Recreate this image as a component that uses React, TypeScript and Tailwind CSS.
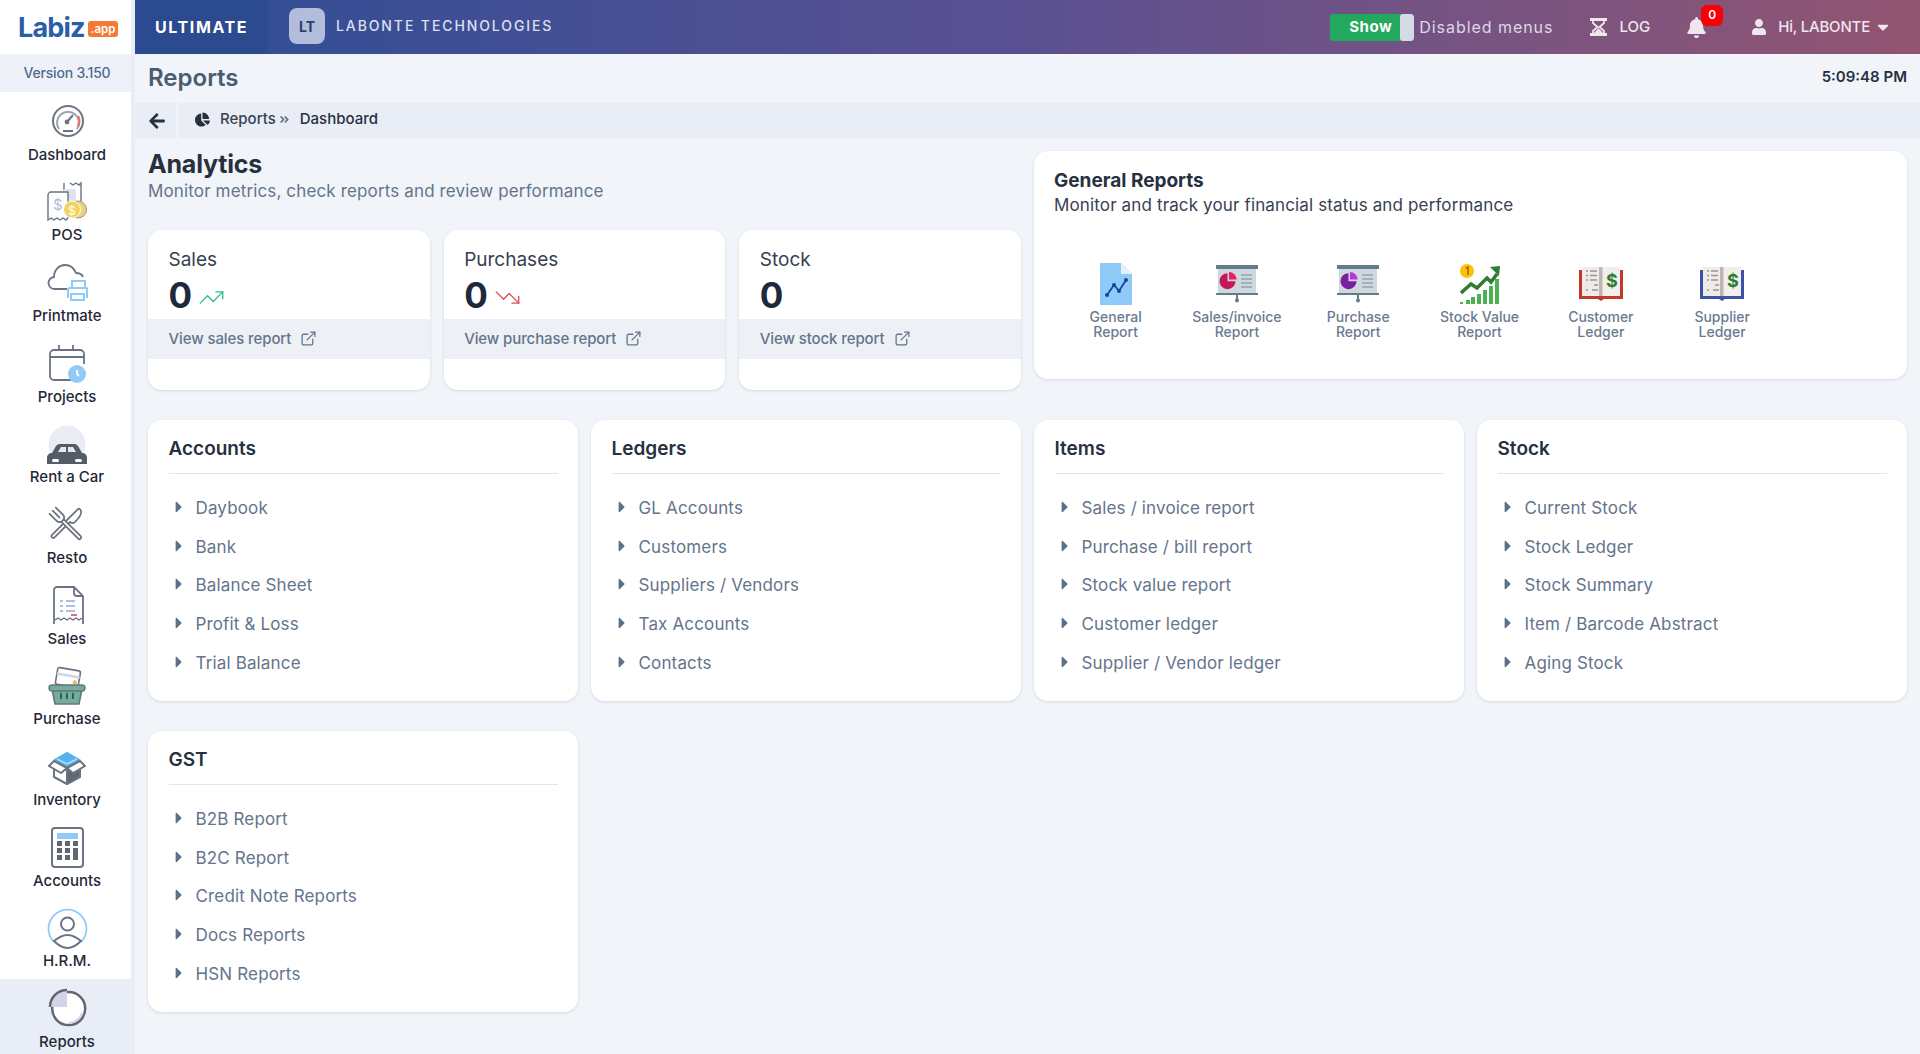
import { ExternalLink, TrendingDown, TrendingUp } from "lucide-react";
import { ReactNode } from "react";
import {
  FaAngleDoubleRight,
  FaArrowLeft,
  FaBell,
  FaCaretDown,
  FaCaretRight,
  FaChartPie,
  FaUser,
} from "react-icons/fa";

const gray = "#6b7280";
const blue = "#90caf9";

function Svg({ size = 40, children }: { size?: number; children: ReactNode }) {
  return (
    <svg width={size} height={size} viewBox="0 0 40 40" fill="none" className="overflow-visible">
      {children}
    </svg>
  );
}

const sideIcons: Record<string, ReactNode> = {
  Dashboard: (
    <Svg>
      <circle cx="21" cy="20" r="15" stroke={gray} strokeWidth="2" />
      <path d="M12 28a11 11 0 1 1 18 0" stroke="#9ca3af" strokeWidth="2" />
      <path d="M31 15a11 11 0 0 1 0 10" stroke="#e57373" strokeWidth="2.5" />
      <path d="M20 21l6-7" stroke={gray} strokeWidth="2" />
      <circle cx="20" cy="21" r="2.4" fill={gray} />
      <path d="M16 30h10" stroke={gray} strokeWidth="2" />
    </Svg>
  ),
  POS: (
    <Svg>
      <path d="M17 10V1M23 1l3 2 3-2 3 2 2-2v18" stroke={gray} strokeWidth="1.4" />
      <rect x="16" y="7" width="13" height="14" rx="2" fill="#dbe4f0" />
      <path d="M21 10H4a3 3 0 0 0-3 3v25l3-2 3 2 3-2 3 2 3-2 3 2 2-2z" fill="#fff" stroke={gray} strokeWidth="1.4" />
      <text x="6" y="28" fontSize="15" fill="#a9c0de" fontFamily="Inter, sans-serif">
        $
      </text>
      <circle cx="31" cy="27.500" r="8.500" fill="#e9d27f" stroke="#9f9369" strokeWidth="1" />
      <circle cx="25" cy="27.500" r="8.500" fill="#f3d35f" stroke="#fff" strokeWidth="1" />
      <text x="21" y="33" fontSize="12" fill="#fff" fontFamily="Inter, sans-serif">
        $
      </text>
    </Svg>
  ),
  Printmate: (
    <Svg>
      <path
        d="M20 27H8a6 6 0 0 1-1-12c0-7 5-12 11-12 5 0 9 3 11 8 3 0 6 1 7 4"
        stroke={gray}
        strokeWidth="1.8"
      />
      <rect x="25" y="19" width="13" height="7" fill="#fff" stroke={blue} strokeWidth="2" />
      <path d="M21 36v-8a2 2 0 0 1 2-2h17v10" fill="#fff" stroke={blue} strokeWidth="2" strokeLinejoin="round" />
      <rect x="24" y="32" width="13" height="6" fill="#fff" stroke={blue} strokeWidth="2" />
    </Svg>
  ),
  Projects: (
    <Svg>
      <path
        d="M27 37H7a4 4 0 0 1-4-4V11a4 4 0 0 1 4-4h26a4 4 0 0 1 4 4v10M3 14h34M12 2v5M26 2v5"
        stroke={gray}
        strokeWidth="1.8"
      />
      <circle cx="30" cy="31" r="9" fill={blue} />
      <path d="M30 27v4l2 2" stroke="#fff" strokeWidth="1.8" />
    </Svg>
  ),
  "Rent a Car": (
    <Svg>
      <circle cx="20" cy="20" r="18.500" fill="#e9edf3" />
      <g transform="translate(0 6)">
        <path
          d="M0 34v-6c0-3 2-5 5-5l4-7c1-1 2-2 3-2h16c1 0 2 1 3 2l4 7c3 0 5 2 5 5v6z"
          fill="#555c68"
        />
        <path d="M11 22l3-5h5v5zM21 17h5l3 5h-8z" fill="#e5e7eb" />
        <rect x="5" y="29" width="7" height="3" rx="1.500" fill="#fff" />
        <rect x="28" y="29" width="7" height="3" rx="1.500" fill="#fff" />
      </g>
    </Svg>
  ),
  Resto: (
    <Svg>
      <g transform="translate(2.400 2.500) scale(0.88)">
        <g transform="rotate(45 20 21)" stroke={gray} strokeWidth="2" strokeLinejoin="round" fill="#fff">
          <path d="M18 -2c4 0 6 6 6 14 0 3-2 4-4 4v25c0 1-1 2-2 2s-2-1-2-2V-1c0-1 1-1 2-1z" />
        </g>
        <g transform="rotate(-45 20 21)" stroke={gray} strokeWidth="2" strokeLinecap="round" strokeLinejoin="round" fill="#fff">
          <path d="M18 14v27c0 1 1 2 2 2s2-1 2-2V14" />
          <path d="M15 -2v11c0 3 2 5 5 5s5-2 5-5V-2" />
          <path d="M20 -2v11" />
        </g>
      </g>
    </Svg>
  ),
  Sales: (
    <Svg>
      <path
        d="M7 39V5a3 3 0 0 1 3-3h17l9 9v28M27 2v6a3 3 0 0 0 3 3h6"
        stroke={gray}
        strokeWidth="1.8"
      />
      <path d="M8 35l3-2 3 2 3-2 3 2 3-2 3 2 3-2 3 2 3-2" stroke={gray} strokeWidth="1.4" />
      <path d="M13 16h3M19 16h9M13 21h3M19 21h9M13 26h3M19 26h9" stroke="#a9c0de" strokeWidth="1.8" />
      <path d="M24 30h6" stroke="#e8688a" strokeWidth="2" />
    </Svg>
  ),
  Purchase: (
    <Svg>
      <g transform="rotate(10 20 14)">
        <rect x="9" y="3" width="23" height="17" rx="2" fill="#fff" stroke={gray} strokeWidth="1.6" />
        <rect x="9" y="8" width="23" height="2.5" fill="#d1d5db" />
        <circle cx="28" cy="15" r="2.2" fill="#f5b45f" />
      </g>
      <path d="M5 23h30l-3 15H8z" fill="#6fae9b" stroke={gray} strokeWidth="1.6" strokeLinejoin="round" />
      <rect x="2" y="19" width="36" height="6" rx="3" fill="#6fae9b" stroke={gray} strokeWidth="1.4" />
      <path d="M14 27v6M20 27v6M26 27v6" stroke="#35564c" strokeWidth="1.8" />
    </Svg>
  ),
  Inventory: (
    <Svg>
      <path d="M6 13L20 21l14-8L20 5z" fill="#4fa6dc" />
      <path d="M8 12L20 5l12 7-12 7z" fill="#58b2ec" />
      <path d="M10 12l10 5 10-5" stroke="#b3dcf7" strokeWidth="1.5" />
      <path d="M7 18v12l13 7V23z" fill="#fff" stroke={gray} strokeWidth="2" strokeLinejoin="round" />
      <path d="M33 18v12l-13 7V23z" fill="#5f6773" stroke={gray} strokeWidth="2" strokeLinejoin="round" />
      <path d="M7 14l-5 5 12 7 6-5zM33 14l5 5-12 7-6-5z" fill="#fff" stroke={gray} strokeWidth="2" strokeLinejoin="round" />
    </Svg>
  ),
  Accounts: (
    <Svg>
      <rect x="5" y="1" width="31" height="39" rx="3" fill="#fff" stroke={gray} strokeWidth="2" />
      <rect x="10" y="6" width="21" height="6" fill={blue} />
      <path
        d="M10 14h5v5h-5zM18 14h5v5h-5zM26 14h5v5h-5zM10 21h5v5h-5zM18 21h5v5h-5zM26 21h5v12h-5zM10 28h5v5h-5zM18 28h5v5h-5z"
        fill="#5f6773"
      />
    </Svg>
  ),
  "H.R.M.": (
    <Svg>
      <path d="M6.500 33.500A19 19 0 1 1 34.500 33.500" stroke={blue} strokeWidth="1.800" />
      <circle cx="20.500" cy="16" r="6.500" stroke={gray} strokeWidth="2" />
      <path d="M7 33c5-4 9-6 13.500-6S29 29 34 33c-5 5-9 7-13.500 7S12 38 7 33z" stroke={gray} strokeWidth="2" />
    </Svg>
  ),
  Reports: (
    <Svg>
      <circle cx="21.700" cy="19.600" r="16.500" fill="#fff" stroke="#5f6773" strokeWidth="2.500" />
      <path d="M20 18H3A17 17 0 0 1 20 1z" fill="#d4d2e6" />
      <path d="M3 18A17 17 0 0 1 20 1" stroke="#5f6773" strokeWidth="2.500" />
      <path d="M35 24a14.500 14.500 0 0 1-13 10" stroke="#d4d2e6" strokeWidth="2" />
    </Svg>
  ),
};

const sideItems = [
  "Dashboard",
  "POS",
  "Printmate",
  "Projects",
  "Rent a Car",
  "Resto",
  "Sales",
  "Purchase",
  "Inventory",
  "Accounts",
  "H.R.M.",
  "Reports",
];

function Presentation({ main, light }: { main: string; light: string }) {
  return (
    <svg width="42" height="38" viewBox="0 0 42 38" fill="none">
      <rect x="2" y="3" width="38" height="26" fill="#cfd8dc" />
      <rect x="0" y="0" width="42" height="4" fill="#607d8b" />
      <rect x="0" y="28" width="42" height="2" fill="#607d8b" />
      <rect x="20" y="30" width="2" height="5" fill="#607d8b" />
      <circle cx="21" cy="35.500" r="2" fill="#607d8b" />
      <path d="M11.500 8.200a8 8 0 1 0 8 8h-8z" fill={main} />
      <path d="M13 7a7.500 7.500 0 0 1 7.500 7.500H13z" fill={light} />
      <path d="M25 10h11M25 14h11M25 18h11M25 22h11" stroke="#90a4ae" strokeWidth="1.500" />
    </svg>
  );
}

function Ledger({ cover }: { cover: string }) {
  return (
    <svg width="44" height="34" viewBox="0 0 44 34" fill="none">
      <path d="M0 3h44v29H25l-3 2-3-2H0z" fill={cover} />
      <rect x="3" y="0" width="19" height="29" fill="#efebe9" />
      <rect x="23" y="0" width="18" height="29" fill="#f2eeec" />
      <rect x="20" y="0" width="3.500" height="29" fill="#bdb5b2" />
      <path
        d="M7 4h2M11 4h7M7 8.500h2M11 8.500h7M7 13h2M11 13h7M15 18h4M7 23h2M13 23h6"
        stroke="#a1938f"
        strokeWidth="1.500"
      />
      <text x="27" y="20" fontSize="18" fontWeight="700" fill="#2e7d32" fontFamily="Inter, sans-serif">
        $
      </text>
    </svg>
  );
}

const reportIcons: { label: [string, string]; icon: ReactNode }[] = [
  {
    label: ["General", "Report"],
    icon: (
      <svg width="32" height="42" viewBox="0 0 32 42" fill="none">
        <path d="M0 0h21l11 11v31H0z" fill={blue} />
        <path d="M21 0l11 11H21z" fill="#e3f2fd" />
        <path d="M7 32l7-10 5 6 7-11" stroke="#0d47a1" strokeWidth="1.800" />
        <circle cx="7" cy="32" r="2" fill="#0d47a1" />
        <circle cx="14" cy="22" r="2" fill="#0d47a1" />
        <circle cx="19" cy="28" r="2" fill="#0d47a1" />
        <circle cx="26" cy="17" r="2" fill="#0d47a1" />
      </svg>
    ),
  },
  { label: ["Sales/invoice", "Report"], icon: <Presentation main="#c2185b" light="#e91e63" /> },
  { label: ["Purchase", "Report"], icon: <Presentation main="#7b1fa2" light="#c02ee0" /> },
  {
    label: ["Stock Value", "Report"],
    icon: (
      <svg width="40" height="40" viewBox="0 0 40 40" fill="none">
        <path
          d="M0 38h3v2H0zM6 36h4v4H6zM11 33h4v7h-4zM17 30h4v10h-4zM23 26h4v14h-4zM29 22h4v18h-4zM35 15h4v25h-4z"
          fill="#4caf50"
        />
        <path d="M1 29l10-9 6 4 10-10 4 4 6-8" stroke="#2e7d32" strokeWidth="3.500" />
        <path d="M30 3l10-1-1 10z" fill="#2e7d32" />
        <circle cx="7" cy="7" r="7" fill="#ffc107" />
        <path d="M6 4l2-1v8" stroke="#9a6a00" strokeWidth="1.500" />
      </svg>
    ),
  },
  { label: ["Customer", "Ledger"], icon: <Ledger cover="#c0392b" /> },
  { label: ["Supplier", "Ledger"], icon: <Ledger cover="#3f51a5" /> },
];

const linkCards: { title: string; links: string[] }[] = [
  { title: "Accounts", links: ["Daybook", "Bank", "Balance Sheet", "Profit & Loss", "Trial Balance"] },
  { title: "Ledgers", links: ["GL Accounts", "Customers", "Suppliers / Vendors", "Tax Accounts", "Contacts"] },
  {
    title: "Items",
    links: [
      "Sales / invoice report",
      "Purchase / bill report",
      "Stock value report",
      "Customer ledger",
      "Supplier / Vendor ledger",
    ],
  },
  {
    title: "Stock",
    links: ["Current Stock", "Stock Ledger", "Stock Summary", "Item / Barcode Abstract", "Aging Stock"],
  },
  { title: "GST", links: ["B2B Report", "B2C Report", "Credit Note Reports", "Docs Reports", "HSN Reports"] },
];

const statCards = [
  { title: "Sales", link: "View sales report", trend: "up" },
  { title: "Purchases", link: "View purchase report", trend: "down" },
  { title: "Stock", link: "View stock report", trend: "" },
];

function Sidebar() {
  return (
    <aside className="flex h-full w-[135px] shrink-0 flex-col border-r-4 border-[#e8edf6] bg-white">
      <div className="flex h-[54px] shrink-0 items-center pl-[18px]">
        <span className="text-[27px] leading-none font-bold tracking-[-0.8px] text-[#2a5ea8]">Labiz</span>
        <span className="mt-[3px] ml-[3px] rounded-[3px] bg-[#f27a34] px-[3px] text-[11.5px] leading-[16px] font-semibold text-white">
          .app
        </span>
      </div>
      <div className="flex h-[38px] shrink-0 items-center justify-center bg-[#eef2f8] pb-[2px] pl-[3px] text-[14px] font-medium tracking-[-0.2px] text-[#4f6b91]">
        Version 3.150
      </div>
      <nav className="-mt-[1px] flex flex-col">
        {sideItems.map((name) => (
          <div
            key={name}
            className={`flex h-[80.7px] shrink-0 flex-col items-center pt-[10px] pl-[3px] ${
              name === "Reports" ? "bg-[#e9edf6]" : ""
            }`}
          >
            <div className="h-10 w-10">{sideIcons[name]}</div>
            <div className="mt-[4.5px] text-[15px] leading-[18px] font-medium text-[#1f2937]">{name}</div>
          </div>
        ))}
      </nav>
    </aside>
  );
}

function TopBar() {
  return (
    <header className="flex h-[54px] shrink-0 items-center bg-gradient-to-r from-[#2c4d96] via-[#5a5091] to-[#925471] text-white">
      <div className="flex h-full w-[133px] items-center bg-[#2b4a90] pl-5 text-[16px] font-bold tracking-[1.6px]">
        ULTIMATE
      </div>
      <div className="ml-[21px] flex h-9 w-9 -translate-y-[1px] items-center justify-center rounded-lg bg-[#b1bddb] text-[14px] font-bold text-[#2d3f6c]">
        LT
      </div>
      <div className="ml-[11px] -translate-y-[2px] text-[14px] font-medium tracking-[1.9px] text-[#dbe0ef]">
        LABONTE TECHNOLOGIES
      </div>
      <div className="ml-auto flex items-center pr-[28px]">
        <div className="flex h-[27px] w-[84px] items-center overflow-hidden rounded-[3px] bg-[#22a95e]">
          <span className="w-[70px] pl-[19px] text-[15px] font-bold tracking-[0.5px]">Show</span>
          <span className="h-full w-[14px] rounded-[3px] bg-[#d5dbe4]" />
        </div>
        <span className="ml-[5px] text-[16px] tracking-[0.95px] text-[#ded8e6]">Disabled menus</span>
        <svg width="17" height="18" viewBox="0 0 17 18" fill="none" className="ml-[37px] text-[#f0e6ee]">
          <path d="M0 0h17v3H0zM0 15h17v3H0z" fill="currentColor" />
          <path d="M3 3v2l4.500 4L3 13v2M14 3v2L9.500 9l4.500 4v2" stroke="currentColor" strokeWidth="1.800" />
          <path d="M8.500 10L13 15H4z" fill="currentColor" />
        </svg>
        <span className="ml-3 text-[15px] font-medium text-[#f0e6ee]">LOG</span>
        <div className="relative ml-9">
          <FaBell className="text-[21px] text-[#f0e6ee]" />
          <span className="absolute -top-[12px] left-[15px] flex h-[21px] w-[22px] items-center justify-center rounded-md bg-[#f90007] text-[12px] font-semibold text-white">
            0
          </span>
        </div>
        <FaUser className="ml-[44px] text-[16px] text-[#f0e6ee]" />
        <span className="ml-[11px] text-[15px] font-medium tracking-[-0.2px] text-[#f0e6ee]">Hi, LABONTE</span>
        <FaCaretDown className="ml-1 text-[18px] text-[#f0e6ee]" />
      </div>
    </header>
  );
}

function StatCard({ title, link, trend }: { title: string; link: string; trend: string }) {
  return (
    <div className="h-40 overflow-hidden rounded-[14px] bg-white pt-[19px] shadow-[0_1px_3px_rgba(15,23,42,0.12)]">
      <div className="px-[20.5px] text-[19px] leading-[22px] text-[#374151]">{title}</div>
      <div className="mt-1 flex h-10 items-center gap-[6px] px-[20.5px] text-[35px] leading-10 font-bold text-[#1e293b]">
        0
        {trend === "up" && <TrendingUp size={27} strokeWidth={1.2} className="mt-[5px] text-[#2ebd85]" />}
        {trend === "down" && <TrendingDown size={27} strokeWidth={1.2} className="mt-[5px] text-[#d9534f]" />}
      </div>
      <div className="mt-1 flex h-10 items-center gap-[9px] bg-[#edf1f6] px-[20.5px] text-[15px] font-medium tracking-[-0.1px] text-[#64748b]">
        {link}
        <ExternalLink size={17} strokeWidth={1.8} className="-mt-[2px]" />
      </div>
    </div>
  );
}

function LinkCard({ title, links }: { title: string; links: string[] }) {
  return (
    <div className="h-[281px] rounded-[14px] bg-white px-[20.5px] pt-[17px] shadow-[0_1px_3px_rgba(15,23,42,0.12)]">
      <div className="border-b border-[#e2e6ec] pb-[12px] text-[19px] leading-6 font-semibold text-[#27303f]">
        {title}
      </div>
      <ul className="mt-[15.5px]">
        {links.map((link) => (
          <li key={link} className="flex h-[38.7px] items-center text-[17px] tracking-[0.15px] text-[#64748b]">
            <span className="flex w-[27px] shrink-0 -translate-y-[2px] pl-[1.5px]">
              <FaCaretRight className="text-[18px] text-[#5d7089]" />
            </span>
            {link}
          </li>
        ))}
      </ul>
    </div>
  );
}

export default function App() {
  return (
    <div className="flex h-[1054px] overflow-hidden bg-[#f1f4f9] font-['Inter',sans-serif]">
      <Sidebar />
      <div className="flex min-w-0 flex-1 flex-col">
        <TopBar />
        <div className="flex h-[49px] shrink-0 items-center justify-between pr-[13px] pb-[2px] pl-[13px]">
          <h1 className="text-[24px] font-semibold text-[#475d72]">Reports</h1>
          <span className="text-[15px] font-semibold text-[#27303f]">5:09:48 PM</span>
        </div>
        <div className="flex h-[35px] shrink-0 items-center bg-[#e9edf6] text-[15px] font-medium text-[#374151]">
          <div className="flex h-full w-[43px] items-center border-r-2 border-[#f1f4f9] pl-[13px]">
            <FaArrowLeft className="text-[18px] text-[#27303f]" />
          </div>
          <FaChartPie className="ml-[17px] -translate-y-[1px] text-[15px] text-[#27303f]" />
          <span className="ml-[10px] -translate-y-[1px]">Reports</span>
          <FaAngleDoubleRight className="ml-[3px] -translate-y-[1px] text-[11px] text-[#6b7280]" />
          <span className="ml-[10px] -translate-y-[1px] text-[#27303f]">Dashboard</span>
        </div>
        <main className="px-[13px] pt-[10px]">
          <div className="grid grid-cols-2 gap-x-[13px]">
            <section>
              <h2 className="text-[25px] leading-8 font-bold tracking-[-0.2px] text-[#27303f]">Analytics</h2>
              <p className="-mt-[1px] text-[17px] leading-6 tracking-[0.14px] text-[#64748b]">
                Monitor metrics, check reports and review performance
              </p>
              <div className="mt-[27px] grid grid-cols-3 gap-x-[14px]">
                {statCards.map((card) => (
                  <StatCard key={card.title} {...card} />
                ))}
              </div>
            </section>
            <section className="mt-[3px] h-[228px] rounded-[14px] bg-white px-5 pt-[18px] shadow-[0_1px_3px_rgba(15,23,42,0.12)]">
              <h2 className="text-[19px] leading-6 font-bold text-[#27303f]">General Reports</h2>
              <p className="text-[17px] leading-6 tracking-[0.14px] text-[#374151]">
                Monitor and track your financial status and performance
              </p>
              <div className="mt-[44px] ml-[1px] flex">
                {reportIcons.map((item) => (
                  <div key={item.label[0]} className="flex w-[121.3px] flex-col items-center">
                    <div className="flex h-[46px] items-center justify-center">{item.icon}</div>
                    <div className="mt-[2px] text-center text-[14px] leading-[15px] font-medium text-[#6b7a90]">
                      {item.label[0]}
                      <br />
                      {item.label[1]}
                    </div>
                  </div>
                ))}
              </div>
            </section>
          </div>
          <div className="mt-[30px] grid grid-cols-4 gap-x-[13px] gap-y-[30px]">
            {linkCards.map((card) => (
              <LinkCard key={card.title} {...card} />
            ))}
          </div>
        </main>
      </div>
    </div>
  );
}
